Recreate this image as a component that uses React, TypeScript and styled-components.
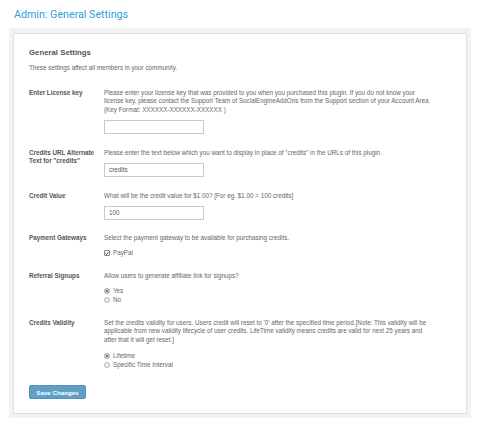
import React from 'react'
import styled, { createGlobalStyle } from 'styled-components'

const GlobalStyle = createGlobalStyle`
body{
    margin: 0;
    background: #fff;
    font-family: "Liberation Sans", Arial, sans-serif;
}
`

const Page = styled.div`
padding: 8px 9px 12px 9px;
`

const Title = styled.h2`
margin: 0 0 6px 5px;
font-family: Roboto, "Liberation Sans", sans-serif;
font-weight: 400;
font-size: 10.7px;
line-height: 14px;
color: #2f9fe0;
`

const Outer = styled.div`
background: #f2f2f2;
padding: 5px 4px 4px 4px;
`

const Panel = styled.div`
background: #fff;
border: 1px solid #dedede;
padding: 12.5px 15px 14px 15px;
`

const Heading = styled.h3`
margin: 0;
font-size: 7.8px;
line-height: 11px;
font-weight: bold;
color: #555;
`

const Sub = styled.p`
margin: 6px 0 0 0;
font-size: 6.3px;
line-height: 8.4px;
color: #666;
`

const Rows = styled.div`
margin-top: 17px;
display: flex;
flex-direction: column;
gap: 14.5px;
`

const Row = styled.div`
display: grid;
grid-template-columns: 75px 332px;
font-size: 6.3px;
line-height: 8.4px;
color: #666;
`

const Label = styled.div`
font-weight: bold;
color: #555;
padding-right: 4px;
`

const Field = styled.div`
display: flex;
flex-direction: column;
align-items: flex-start;
`

const Desc = styled.div``

const TextInput = styled.div`
margin-top: 6px;
width: 100px;
height: 14px;
box-sizing: border-box;
border: 1px solid #c9c9c9;
padding-left: 4px;
display: flex;
align-items: center;
color: #555;
`

const Options = styled.div<{ $gap: number }>`
margin-top: ${p => p.$gap}px;
display: flex;
flex-direction: column;
`

const Option = styled.label`
display: flex;
align-items: center;
gap: 3px;
height: 9px;
color: #666;
`

const Box = styled.span`
width: 6px;
height: 6px;
box-sizing: border-box;
border: 1px solid #8a8a8a;
border-radius: 1px;
background: #f4f4f4;
display: flex;
align-items: center;
justify-content: center;
`

const Radio = styled.span<{ $on?: boolean }>`
width: 6px;
height: 6px;
box-sizing: border-box;
border: 1px solid #b5b5b5;
border-radius: 50%;
background: ${p => p.$on ? '#555' : '#eee'};
box-shadow: ${p => p.$on ? 'inset 0 0 0 1px #eee' : 'none'};
`

const SaveButton = styled.button`
margin-top: 16px;
width: 57px;
height: 14px;
padding: 0;
background: #619fc6;
border: 1px solid #5492ba;
border-radius: 2px;
color: #fff;
font-family: "Liberation Sans", Arial, sans-serif;
font-size: 6.2px;
font-weight: bold;
`

const Check = () => (
    <Box>
        <svg width="5" height="5" viewBox="0 0 10 10">
            <path d="M1.5 5.2 L4 7.8 L8.7 1.8" fill="none" stroke="#333" strokeWidth="2" />
        </svg>
    </Box>
)

const App = () => {
    return (
        <Page>
            <GlobalStyle />
            <Title>Admin: General Settings</Title>
            <Outer>
                <Panel>
                    <Heading>General Settings</Heading>
                    <Sub>These settings affect all members in your community.</Sub>
                    <Rows>
                        <Row>
                            <Label>Enter License key</Label>
                            <Field>
                                <Desc>Please enter your license key that was provided to you when you purchased this plugin. If you do not know your license key, please contact the Support Team of SocialEngineAddOns from the Support section of your Account Area. (Key Format: XXXXXX-XXXXXX-XXXXXX )</Desc>
                                <TextInput></TextInput>
                            </Field>
                        </Row>
                        <Row>
                            <Label>Credits URL Alternate Text for "credits"</Label>
                            <Field>
                                <Desc>Please enter the text below which you want to display in place of "credits" in the URLs of this plugin.</Desc>
                                <TextInput>credits</TextInput>
                            </Field>
                        </Row>
                        <Row>
                            <Label>Credit Value</Label>
                            <Field>
                                <Desc>What will be the credit value for $1.00? [For eg. $1.00 = 100 credits]</Desc>
                                <TextInput>100</TextInput>
                            </Field>
                        </Row>
                        <Row>
                            <Label>Payment Gateways</Label>
                            <Field>
                                <Desc>Select the payment gateway to be available for purchasing credits.</Desc>
                                <Options $gap={6}>
                                    <Option><Check />PayPal</Option>
                                </Options>
                            </Field>
                        </Row>
                        <Row>
                            <Label>Referral Signups</Label>
                            <Field>
                                <Desc>Allow users to generate affiliate link for signups?</Desc>
                                <Options $gap={5.5}>
                                    <Option><Radio $on />Yes</Option>
                                    <Option><Radio />No</Option>
                                </Options>
                            </Field>
                        </Row>
                        <Row>
                            <Label>Credits Validity</Label>
                            <Field>
                                <Desc>Set the credits validity for users. Users credit will reset to '0' after the specified time period.[Note: This validity will be applicable from new validity lifecycle of user credits. LifeTime validity means credits are valid for next 25 years and after that it will get reset.]</Desc>
                                <Options $gap={7.5}>
                                    <Option><Radio $on />Lifetime</Option>
                                    <Option><Radio />Specific Time Interval</Option>
                                </Options>
                            </Field>
                        </Row>
                    </Rows>
                    <SaveButton>Save Changes</SaveButton>
                </Panel>
            </Outer>
        </Page>
    )
}

export default App
